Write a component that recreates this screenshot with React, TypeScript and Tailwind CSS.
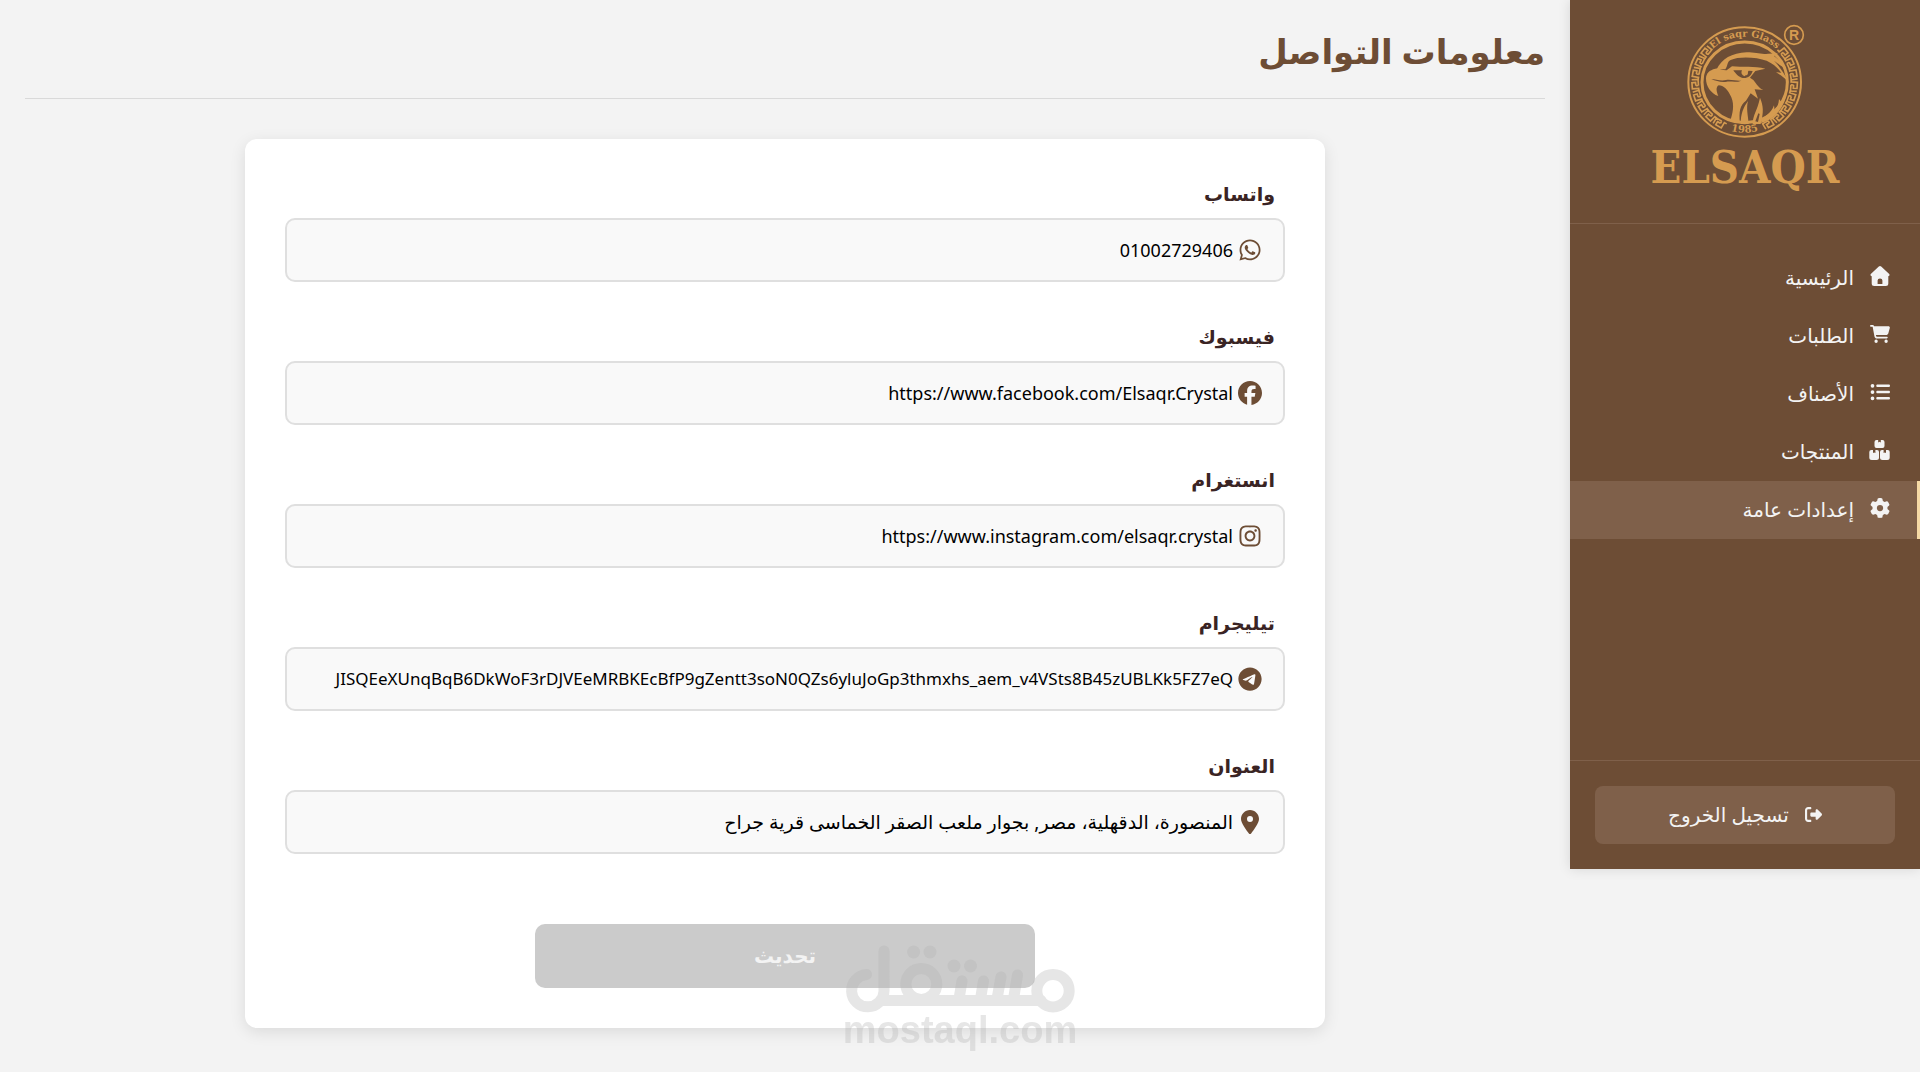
import { useState } from "react";
import type { ComponentType, ChangeEvent } from "react";
import {
	FaCartShopping,
	FaFacebook,
	FaGear,
	FaInstagram,
	FaListUl,
	FaLocationDot,
	FaRightFromBracket,
	FaTelegram,
	FaWhatsapp,
} from "react-icons/fa6";

interface IconProps {
	className?: string;
}

interface NavItem {
	label: string;
	icon: ComponentType<IconProps>;
	active?: boolean;
}

interface ContactField {
	id: string;
	label: string;
	icon: ComponentType<IconProps>;
	value: string;
	textSize: string;
}

//------ Icons ------//
function HomeIcon({ className }: IconProps) {
	return (
		<svg viewBox="0 0 20 20" className={className} fill="currentColor">
			<path fillRule="evenodd" d="M8.800 .5Q10-.5 11.200 .5L19.200 8Q20.200 9.400 18.300 10.200V17.500Q18.300 20 15.800 20H4.200Q1.700 20 1.700 17.500V10.200Q-.2 9.400 .8 8ZM7.600 18H12.400V14.400Q12.400 12.400 10 12.400T7.600 14.400Z" />
		</svg>
	);
}

function BoxesIcon({ className }: IconProps) {
	return (
		<svg viewBox="0 0 21 20" className={className} fill="currentColor">
			<path d="M7.500 0H9.200V2.400L10.500 1.800L11.800 2.400V0H13.500Q15.500 0 15.500 2V6Q15.500 8 13.500 8H7.500Q5.500 8 5.500 6V2Q5.500 0 7.500 0Z" />
			<path d="M2.300 10H4V13L5.200 12.400L6.400 13V10H8Q10 10 10 12V17.500Q10 20 7.500 20H2.800Q.3 20 .3 17.500V12Q.3 10 2.300 10Z" />
			<path d="M13 10H14.600V13L15.800 12.400L17 13V10H18.700Q20.700 10 20.700 12V17.500Q20.700 20 18.200 20H13.500Q11 20 11 17.500V12Q11 10 13 10Z" />
		</svg>
	);
}

const navItems: NavItem[] = [
	{ label: "الرئيسية", icon: HomeIcon },
	{ label: "الطلبات", icon: FaCartShopping },
	{ label: "الأصناف", icon: FaListUl },
	{ label: "المنتجات", icon: BoxesIcon },
	{ label: "إعدادات عامة", icon: FaGear, active: true },
];

const initialFields: ContactField[] = [
	{ id: "whatsapp", label: "واتساب", icon: FaWhatsapp, value: "01002729406", textSize: "text-lg" },
	{ id: "facebook", label: "فيسبوك", icon: FaFacebook, value: "https://www.facebook.com/Elsaqr.Crystal", textSize: "text-lg" },
	{ id: "instagram", label: "انستغرام", icon: FaInstagram, value: "https://www.instagram.com/elsaqr.crystal", textSize: "text-lg" },
	{
		id: "telegram",
		label: "تيليجرام",
		icon: FaTelegram,
		value: "JISQEeXUnqBqB6DkWoF3rDJVEeMRBKEcBfP9gZentt3soN0QZs6yluJoGp3thmxhs_aem_v4VSts8B45zUBLKk5FZ7eQ",
		textSize: "text-[17px]",
	},
	{
		id: "address",
		label: "العنوان",
		icon: FaLocationDot,
		value: "المنصورة، الدقهلية، مصر, بجوار ملعب الصقر الخماسى قرية جراح",
		textSize: "text-[19px]",
	},
];

// Angles of the greek key units, clockwise from the top of the ring
const keyAngles = [52, 66, 80, 94, 108, 122, 136, 150, 210, 224, 238, 252, 266, 280, 294, 308];

//------ Logo ------//
function Logo() {
	return (
		<svg viewBox="0 0 630 570" className="w-[210px] h-[190px]" fill="#d59b50" role="img" aria-label="ELSAQR">
			<defs>
				<path id="ringTop" d="M174 216a140 136 0 0 1 280 0" />
				<path id="ringBottom" d="M158 216a156 152 0 0 0 312 0" />
			</defs>
			<g fill="none" stroke="#d59b50">
				<ellipse cx="314" cy="216" rx="169" ry="164" strokeWidth="6" />
				<ellipse cx="314" cy="217" rx="128" ry="121" strokeWidth="9" />
				{keyAngles.map((angle) => (
					<path
						key={angle}
						strokeWidth="5"
						transform={`translate(314 216) scale(1 .97) rotate(${angle}) translate(0 -149)`}
						d="M-18 10H-10V-9H9V2H-1M-1 10H18V-9M-1 10V2"
					/>
				))}
			</g>
			<text fontFamily="DejaVu Serif" fontWeight="bold" fontSize="29">
				<textPath href="#ringTop" startOffset="50%" textAnchor="middle">El saqr Glass</textPath>
			</text>
			<text fontFamily="DejaVu Serif" fontWeight="bold" fontSize="30">
				<textPath href="#ringBottom" startOffset="50%" textAnchor="middle">1985</textPath>
			</text>
			{/* Crown and nape */}
			<path d="M230 178C244 148 276 128 320 127C348 127 362 134 384 131L414 130L402 138C416 148 428 160 436 176C428 170 414 162 402 152C416 166 430 186 446 216C436 206 424 196 408 187L424 188C412 172 400 162 380 152C350 141 296 138 272 150C260 156 264 168 256 178Z" />
			{/* Beak, face and throat */}
			<path d="M198 206C198 190 208 180 226 176C238 173 246 182 260 181L276 169C306 172 344 168 376 176L346 183L330 203L340 210C350 222 356 234 370 240L344 238L354 266L332 250L318 272C300 284 296 306 300 340L270 334C278 312 284 286 274 262C264 238 250 226 236 226C226 232 230 246 235 258C212 250 198 228 198 206Z" />
			<path d="M280 181L306 181C302 189 306 196 314 199L326 182L338 183C334 198 322 206 308 204C296 202 286 190 280 181Z" fill="#6d4d35" />
			<circle cx="316" cy="188" r="8" />
			<path d="M214 207C226 208 244 214 258 210C276 208 290 214 304 212C290 218 276 214 260 215C244 218 228 213 214 207Z" fill="#6d4d35" />
			{/* Neck feathers */}
			<path d="M302 342C302 312 310 292 324 273C318 296 324 314 326 342Z" />
			<path d="M338 342C338 316 352 302 360 263C370 288 372 304 362 342Z" />
			<path d="M346 334L355 310L359 312L354 336Z" fill="#6d4d35" />
			<path d="M362 339C368 316 394 314 402 286L404 302C412 292 416 282 417 267L424 276C432 264 438 256 442 240C438 282 410 328 362 339Z" />
			{/* Registered mark */}
			<circle cx="462" cy="75" r="28" fill="none" stroke="#d59b50" strokeWidth="5" />
			<text x="462" y="90" textAnchor="middle" fontFamily="Liberation Sans" fontWeight="bold" fontSize="42">R</text>
			<text x="315" y="520" textAnchor="middle" fontFamily="DejaVu Serif Condensed, DejaVu Serif" fontWeight="bold" fontSize="135">ELSAQR</text>
		</svg>
	);
}

//------ Watermark ------//
function Watermark() {
	return (
		<svg viewBox="20 40 240 120" className="fixed left-1/2 bottom-3 -translate-x-1/2 w-60 h-30 opacity-33 pointer-events-none" role="img" aria-label="مستقل">
			<g fill="none" stroke="#b4b4b4" strokeWidth="11">
				<path
					strokeLinecap="round"
					strokeLinejoin="round"
					d="M46.500 74.500A16.200 16.200 0 1 0 64 91V51"
				/>
				<path d="M62 100.500H221M142 81l-3 18M163.500 81l-3 18M181 77l-4 22M197.500 75l-4 24" strokeLinecap="round" />
				<circle cx="101.300" cy="84" r="15.500" />
				<circle cx="233" cy="90.700" r="16.200" />
			</g>
			<g fill="#b4b4b4">
				<circle cx="93.600" cy="52" r="6.500" />
				<circle cx="110" cy="52" r="6.500" />
				<circle cx="134" cy="66" r="6.500" />
				<circle cx="150.500" cy="66" r="6.500" />
				<text x="140" y="143" textAnchor="middle" fontFamily="Liberation Sans" fontWeight="bold" fontSize="38">mostaql.com</text>
			</g>
		</svg>
	);
}

function App() {
	const [fields, setFields] = useState<ContactField[]>(initialFields);

	const handleChange = (event: ChangeEvent<HTMLInputElement>) => {
		const { id, value } = event.target;
		setFields(fields.map((field) => (field.id === id ? { ...field, value } : field)));
	};

	const changed = fields.some((field, index) => field.value !== initialFields[index].value);

	return (
		<div dir="rtl" className="min-h-screen flex items-start bg-[#f3f3f3] font-['Noto_Sans','DejaVu_Sans',sans-serif]">
			{/* Sidebar */}
			<aside className="w-[350px] shrink-0 flex flex-col bg-[#6d4d35] text-[#f3f3f3] shadow-[0_0_12px_rgba(0,0,0,0.12)]">
				<div className="flex justify-center pt-[10px] pb-[23px] border-b border-[#7f604a]">
					<Logo />
				</div>
				<nav className="pt-[25px] pb-[221px]">
					<ul>
						{navItems.map(({ label, icon: Icon, active }) => (
							<li key={label}>
								<a
									href="#"
									className={
										active
											? "h-[58px] flex items-center gap-4 pr-[27px] border-r-3 border-[#f5d9a5] bg-[#7f604a]"
											: "h-[58px] flex items-center gap-4 pr-[30px]"
									}
								>
									<span className="w-5 shrink-0 flex mb-1">
										<Icon className="h-5 w-auto shrink-0" />
									</span>
									<span className="text-xl font-medium">{label}</span>
								</a>
							</li>
						))}
					</ul>
				</nav>
				<div className="p-[25px] border-t border-[#7f604a]">
					<button type="button" className="w-full h-[58px] flex items-center justify-center gap-4 rounded-lg bg-[#7f604a] text-xl font-medium">
						<FaRightFromBracket className="size-[17px] mb-[2px]" />
						تسجيل الخروج
					</button>
				</div>
			</aside>

			{/* Contact information */}
			<main className="flex-1 min-w-0 px-[25px] pb-11">
				<h1 className="h-[99px] pt-[31px] border-b border-[#d9d9d9] text-[34px] leading-10 font-bold text-[#6d4d35]">معلومات التواصل</h1>
				<form className="max-w-[1080px] mx-auto mt-10 p-10 rounded-xl bg-white shadow-[0_4px_16px_rgba(0,0,0,0.1)]">
					<div className="flex flex-col gap-10">
						{fields.map(({ id, label, icon: Icon, value, textSize }) => (
							<div key={id}>
								<label htmlFor={id} className="block h-[39px] pr-[10px] text-[19px] leading-[30px] font-bold text-[#3a2424]">{label}</label>
								<div className="h-16 flex items-center gap-[5px] px-[21px] rounded-[10px] border-2 border-[#dfdfdf] bg-[#f9f9f9]">
									<Icon className="size-6 shrink-0 text-[#6d4d35]" />
									<input
										id={id}
										type="text"
										value={value}
										onChange={handleChange}
										className={`flex-1 min-w-0 h-full pb-px text-black outline-none ${textSize}`}
									/>
								</div>
							</div>
						))}
					</div>
					<button
						type="submit"
						disabled={!changed}
						className="block w-1/2 h-16 mt-[70px] mx-auto rounded-[10px] bg-[#6d4d35] text-xl font-bold text-[#f3f3f3] disabled:bg-[#cbcbcb]"
					>
						تحديث
					</button>
				</form>
			</main>
			<Watermark />
		</div>
	);
}

export default App;
